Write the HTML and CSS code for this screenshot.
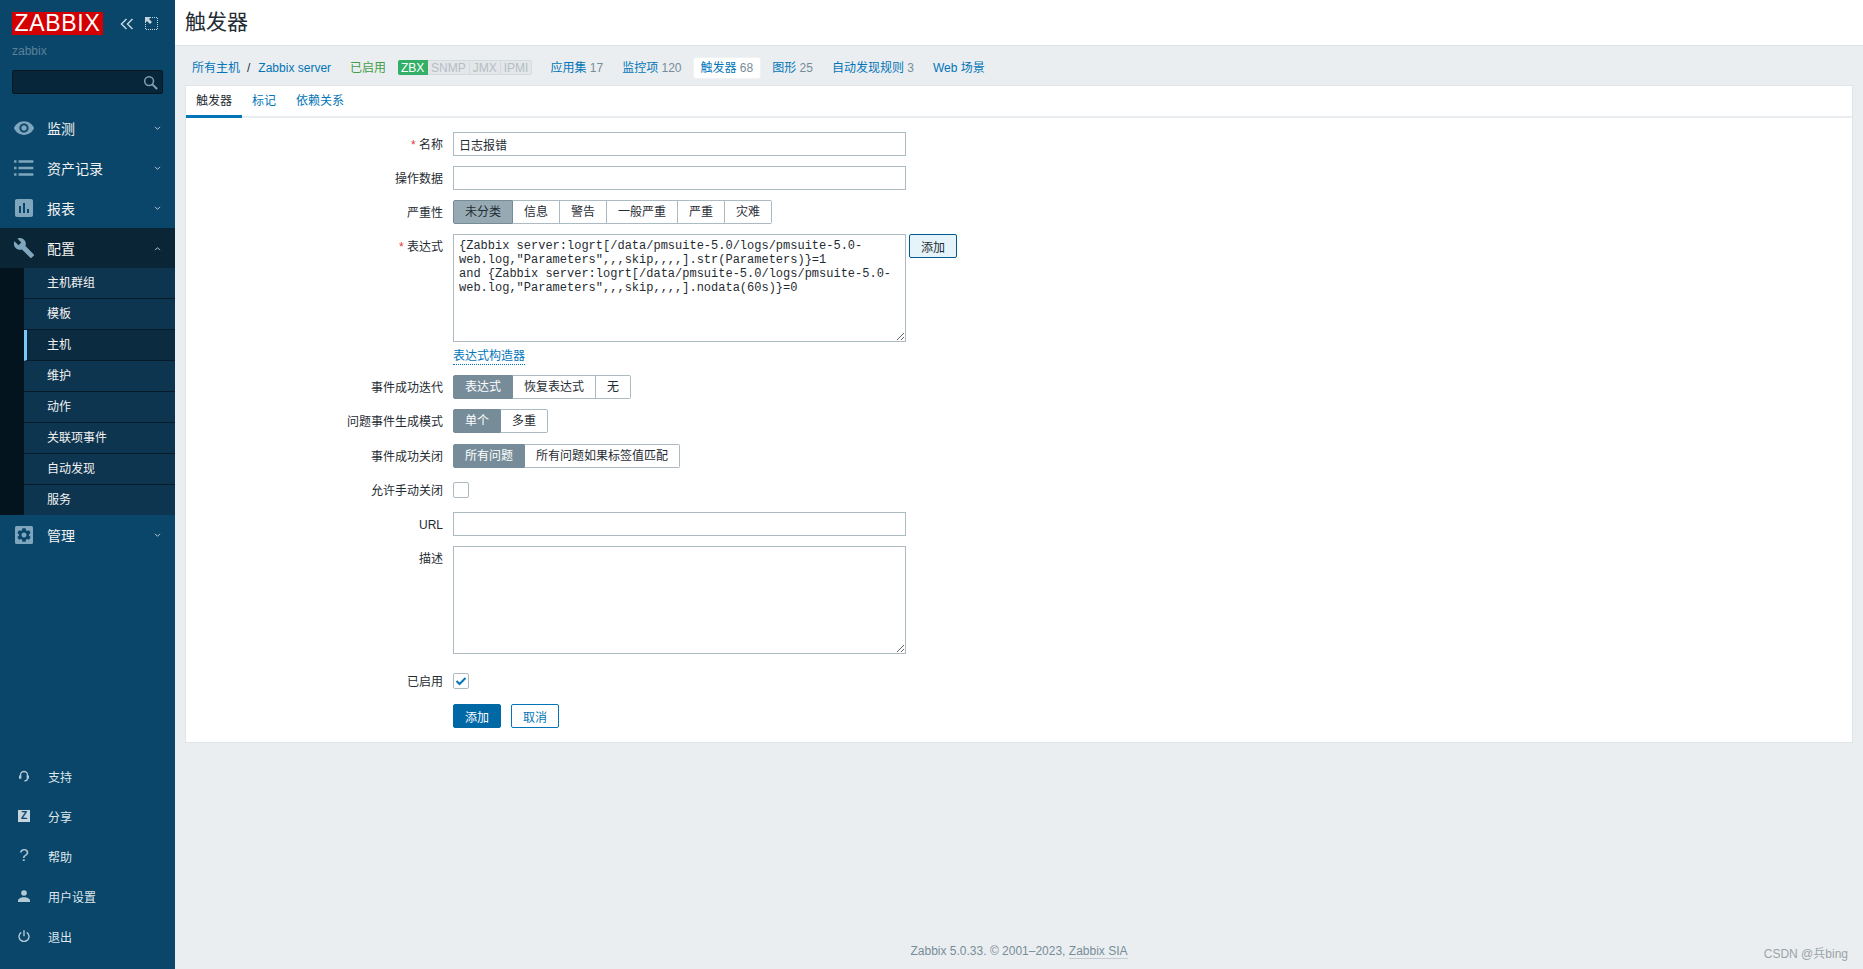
FILE: index.html
```html
<!DOCTYPE html>
<html lang="zh">
<head>
<meta charset="utf-8">
<title>触发器</title>
<link rel="stylesheet" href="styles.css">
</head>
<body>
<div class="app">
  <aside class="sidebar">
    <div class="brand">
      <div class="logo">ZABBIX</div>
      <svg class="collapse" viewBox="0 0 14 14"><path d="M6.500 2 1.500 7l5 5M12.500 2l-5 5 5 5" fill="none" stroke="currentColor" stroke-width="1.500"/></svg>
      <svg class="expand" viewBox="0 0 13 13"><path d="M.5 3v9.500h12V.5H3" fill="none" stroke="currentColor" stroke-dasharray="1 1"/><path d="M0 0h6L4 2l3 3-2 2-3-3-2 2z" fill="currentColor"/></svg>
    </div>
    <div class="host">zabbix</div>
    <div class="search">
      <svg viewBox="0 0 16 16"><circle cx="6.500" cy="6.500" r="4.700" fill="none" stroke="currentColor" stroke-width="1.600"/><path d="m10 10 5 5" stroke="currentColor" stroke-width="2.200"/></svg>
    </div>
    <nav class="menu">
      <div class="item">
        <svg class="ico" viewBox="0 0 24 24"><path d="M12 4.500C7 4.500 2.730 7.610 1 12c1.730 4.390 6 7.500 11 7.500s9.270-3.110 11-7.500c-1.730-4.390-6-7.500-11-7.500zM12 17c-2.760 0-5-2.240-5-5s2.240-5 5-5 5 2.240 5 5-2.240 5-5 5zm0-8c-1.660 0-3 1.340-3 3s1.340 3 3 3 3-1.340 3-3-1.340-3-3-3z"/></svg>
        <span>监测</span>
        <svg class="chev" viewBox="0 0 8 6"><path d="m1 1 3 3 3-3" fill="none" stroke="currentColor" stroke-width="1.200"/></svg>
      </div>
      <div class="item">
        <svg class="ico" viewBox="0 0 20 20"><path d="M1 3h2.200v2.200H1zM5 3h13.500v2.200H5zM1 8.900h2.200v2.200H1zM5 8.900h13.500v2.200H5zM1 14.800h2.200V17H1zM5 14.800h13.500V17H5z"/></svg>
        <span>资产记录</span>
        <svg class="chev" viewBox="0 0 8 6"><path d="m1 1 3 3 3-3" fill="none" stroke="currentColor" stroke-width="1.200"/></svg>
      </div>
      <div class="item">
        <svg class="ico" viewBox="3 3 18 18"><path d="M19 3H5c-1.100 0-2 .9-2 2v14c0 1.100.9 2 2 2h14c1.100 0 2-.9 2-2V5c0-1.100-.9-2-2-2zM9 17H7v-7h2v7zm4 0h-2V7h2v10zm4 0h-2v-4h2v4z"/></svg>
        <span>报表</span>
        <svg class="chev" viewBox="0 0 8 6"><path d="m1 1 3 3 3-3" fill="none" stroke="currentColor" stroke-width="1.200"/></svg>
      </div>
      <div class="item open">
        <svg class="ico" viewBox="0 0 24 24"><path d="M22.700 19l-9.100-9.100c.9-2.300.4-5-1.500-6.900-2-2-5-2.400-7.400-1.300L9 6 6 9 1.600 4.700C.4 7.100.9 10.100 2.900 12.100c1.900 1.900 4.600 2.400 6.900 1.500l9.100 9.100c.4.4 1 .4 1.400 0l2.300-2.300c.5-.4.5-1.100.1-1.400z"/></svg>
        <span>配置</span>
        <svg class="chev" viewBox="0 0 8 6"><path d="m1 5 3-3 3 3" fill="none" stroke="currentColor" stroke-width="1.200"/></svg>
      </div>
      <ul class="sub">
        <li>主机群组</li>
        <li>模板</li>
        <li class="active">主机</li>
        <li>维护</li>
        <li>动作</li>
        <li>关联项事件</li>
        <li>自动发现</li>
        <li>服务</li>
      </ul>
      <div class="item">
        <svg class="ico gear" viewBox="0 0 18 18"><rect width="18" height="18" rx="1.500"/><path class="hole" transform="translate(.6 .6) scale(.7)" d="M19.140 12.940c.04-.3.06-.61.06-.94 0-.32-.02-.64-.07-.94l2.030-1.580c.18-.14.23-.41.12-.61l-1.920-3.320c-.12-.22-.37-.29-.59-.22l-2.390.96c-.5-.38-1.030-.7-1.620-.94l-.36-2.540c-.04-.24-.24-.41-.48-.41h-3.840c-.24 0-.43.17-.47.41l-.36 2.540c-.59.24-1.130.57-1.620.94l-2.390-.96c-.22-.08-.47 0-.59.22L2.740 8.870c-.12.21-.08.47.12.61l2.030 1.580c-.05.3-.09.63-.09.94s.02.64.07.94l-2.030 1.580c-.18.14-.23.41-.12.61l1.920 3.320c.12.22.37.29.59.22l2.390-.96c.5.38 1.030.7 1.620.94l.36 2.540c.05.24.24.41.48.41h3.840c.24 0 .44-.17.47-.41l.36-2.540c.59-.24 1.130-.56 1.620-.94l2.390.96c.22.08.47 0 .59-.22l1.920-3.320c.12-.22.07-.47-.12-.61l-2.010-1.580zM12 15.600c-1.980 0-3.600-1.620-3.600-3.600s1.620-3.600 3.600-3.600 3.600 1.620 3.600 3.600-1.620 3.600-3.600 3.600z"/></svg>
        <span>管理</span>
        <svg class="chev" viewBox="0 0 8 6"><path d="m1 1 3 3 3-3" fill="none" stroke="currentColor" stroke-width="1.200"/></svg>
      </div>
    </nav>
    <div class="user-menu">
      <div class="uitem">
        <span class="uico"><svg viewBox="0 0 12 12"><path d="M2.500 7V5a3.500 3.500 0 0 1 7 0v2M9.500 8.500c0 1.500-1 2.300-3 2.500" fill="none" stroke="currentColor" stroke-width="1.300"/><path d="M1 5.500h2.300v3.200H1zM8.700 5.500H11v3.200H8.700z" fill="currentColor"/></svg></span>
        <span>支持</span>
      </div>
      <div class="uitem"><span class="uico"><b class="zbox">Z</b></span><span>分享</span></div>
      <div class="uitem"><span class="uico qmark">?</span><span>帮助</span></div>
      <div class="uitem">
        <span class="uico"><svg viewBox="0 0 12 12"><circle cx="6" cy="3" r="2.800" fill="currentColor"/><path d="M0 12V10.500C0 8.500 3 7.200 6 7.200s6 1.300 6 3.300V12z" fill="currentColor"/></svg></span>
        <span>用户设置</span>
      </div>
      <div class="uitem">
        <span class="uico"><svg viewBox="0 0 12 12"><path d="M3.300 2.300a5 5 0 1 0 5.400 0M6 .2v6" fill="none" stroke="currentColor" stroke-width="1.400"/></svg></span>
        <span>退出</span>
      </div>
    </div>
  </aside>

  <main class="main">
    <header class="head"><h1>触发器</h1></header>
    <nav class="crumbs">
      <a class="crumb">所有主机</a><span class="sep">/</span><a class="crumb crumb-host">Zabbix server</a>
      <span class="crumb status">已启用</span>
      <span class="tags"><b class="tag on">ZBX</b><b class="tag">SNMP</b><b class="tag">JMX</b><b class="tag">IPMI</b></span>
      <a class="crumb">应用集 <i>17</i></a>
      <a class="crumb">监控项 <i>120</i></a>
      <a class="crumb current">触发器 <i>68</i></a>
      <a class="crumb">图形 <i>25</i></a>
      <a class="crumb">自动发现规则 <i>3</i></a>
      <a class="crumb">Web 场景</a>
    </nav>
    <section class="panel">
      <div class="tabs">
        <a class="tab selected">触发器</a>
        <a class="tab">标记</a>
        <a class="tab">依赖关系</a>
      </div>
      <form class="form">
        <label class="lbl"><em>*</em> 名称</label>
        <div><input class="field" type="text" value="日志报错"></div>

        <label class="lbl">操作数据</label>
        <div><input class="field" type="text"></div>

        <label class="lbl">严重性</label>
        <div class="seg">
          <span class="opt sev">未分类</span><span class="opt">信息</span><span class="opt">警告</span><span class="opt">一般严重</span><span class="opt">严重</span><span class="opt">灾难</span>
        </div>

        <label class="lbl"><em>*</em> 表达式</label>
        <div class="expr">
          <div class="expr-line">
            <textarea class="field area" spellcheck="false">{Zabbix server:logrt[/data/pmsuite-5.0/logs/pmsuite-5.0-web.log,"Parameters",,,skip,,,,].str(Parameters)}=1
and {Zabbix server:logrt[/data/pmsuite-5.0/logs/pmsuite-5.0-web.log,"Parameters",,,skip,,,,].nodata(60s)}=0</textarea>
            <button class="btn-add" type="button">添加</button>
          </div>
          <a class="builder">表达式构造器</a>
        </div>

        <label class="lbl">事件成功迭代</label>
        <div class="seg"><span class="opt on">表达式</span><span class="opt">恢复表达式</span><span class="opt">无</span></div>

        <label class="lbl">问题事件生成模式</label>
        <div class="seg"><span class="opt on">单个</span><span class="opt">多重</span></div>

        <label class="lbl nudge">事件成功关闭</label>
        <div class="seg nudge"><span class="opt on">所有问题</span><span class="opt">所有问题如果标签值匹配</span></div>

        <label class="lbl">允许手动关闭</label>
        <div class="check-cell"><span class="check"></span></div>

        <label class="lbl">URL</label>
        <div><input class="field" type="text"></div>

        <label class="lbl">描述</label>
        <div><textarea class="field area"></textarea></div>

        <label class="lbl lbl-en">已启用</label>
        <div class="check-cell cell-en"><span class="check"><svg viewBox="0 0 14 14"><path d="m2.500 7 3 3 6-6" fill="none" stroke="#0275b8" stroke-width="2"/></svg></span></div>

        <div class="actions">
          <button class="btn primary" type="button">添加</button>
          <button class="btn ghost" type="button">取消</button>
        </div>
      </form>
    </section>
    <footer class="foot">Zabbix 5.0.33. © 2001–2023, <a>Zabbix SIA</a></footer>
    <div class="mark">CSDN @兵bing</div>
  </main>
</div>
</body>
</html>
```

FILE: styles.css
```css
* { box-sizing: border-box; }
html, body { margin: 0; height: 100%; }
body {
  font-family: "Liberation Sans", "Noto Sans CJK SC", sans-serif;
  font-size: 12px;
  color: #1f2c33;
  background: #ebeef0;
  overflow: hidden;
}
.app { display: flex; height: 969px; }

/* sidebar */
.sidebar {
  width: 175px;
  flex: none;
  background: #0a466a;
  color: #f2f2f2;
  display: flex;
  flex-direction: column;
}
.brand { display: flex; align-items: center; padding: 12px 0 0 12px; height: 35px; }
.logo {
  width: 91px;
  height: 23px;
  background: #d40000;
  color: #fff;
  font-size: 23px;
  line-height: 23px;
  letter-spacing: .7px;
  text-align: center;
}
.collapse { width: 14px; height: 14px; margin-left: 17px; color: #c5d4dd; }
.expand { width: 13px; height: 13px; margin-left: 11px; color: #c5d4dd; }
.host { margin: 9px 0 0 12px; height: 14px; line-height: 14px; color: #5c8199; }
.search {
  margin: 12px 12px 0;
  height: 24px;
  background: #08263a;
  border: 1px solid #04161f;
  border-radius: 2px;
  display: flex;
  align-items: center;
  justify-content: flex-end;
  padding-right: 4px;
  color: #7fa0b3;
}
.search svg { width: 15px; height: 15px; }
.menu { margin-top: 14px; }
.item {
  height: 40px;
  display: flex;
  align-items: center;
  padding-left: 13px;
  font-size: 14px;
  color: #f2f2f2;
}
.item.open { background: #0a2536; }
.ico { width: 22px; height: 22px; fill: #7fa6bd; flex: none; }
.item:nth-child(3) .ico, .gear { width: 18px; height: 18px; margin: 0 2px 0 2px; }
.hole { fill: #0a466a; }
.item span { margin-left: 12px; flex: 1; }
.chev { width: 7px; height: 5px; margin-right: 14px; color: #b5c7d2; }
.sub {
  list-style: none;
  margin: 0;
  padding: 0 0 0 24px;
  background: #04141f;
}
.sub li {
  height: 31px;
  line-height: 29px;
  padding: 1px 0 0 23px;
  background: #0e3550;
  border-bottom: 1px solid #061c2b;
  color: #f2f2f2;
}
.sub li:last-child { height: 30px; border-bottom: 0; }
.sub li.active {
  background: #0a2b40;
  border-left: 3px solid #7ac8f5;
  padding-left: 20px;
}
.user-menu { margin-top: auto; padding-bottom: 13px; }
.uitem { height: 40px; display: flex; align-items: center; padding-left: 18px; color: #dfe7ec; }
.uico {
  width: 12px;
  height: 12px;
  margin-right: 18px;
  color: #b3c9d6;
  display: flex;
  align-items: center;
  justify-content: center;
}
.uico svg { width: 12px; height: 12px; }
.zbox {
  width: 12px;
  height: 12px;
  flex: none;
  background: #c4d5df;
  color: #0a466a;
  font-size: 10px;
  line-height: 12px;
  text-align: center;
}
.qmark { font-size: 17px; font-weight: 400; }

/* main */
.main { flex: 1; min-width: 0; display: flex; flex-direction: column; position: relative; }
.head { height: 46px; background: #fff; border-bottom: 1px solid #dfe4e7; padding-left: 10px; }
.head h1 { margin: 0; font-size: 21px; font-weight: 400; line-height: 44px; color: #1f2c33; }
.crumbs { height: 39px; display: flex; align-items: center; padding-left: 10px; padding-top: 4px; color: #0275b8; }
.crumb { padding: 0 7px; height: 20px; line-height: 20px; margin-right: 5px; color: #0275b8; white-space: nowrap; }
.crumb i { font-style: normal; color: #768d99; }
.crumb.current { background: #fff; border-radius: 2px; box-shadow: 0 0 0 1px #f0f2f3; }
.crumb.status { color: #429e47; }
.crumbs .crumb:first-child { margin-right: 0; }
.sep { color: #1f2c33; margin-right: 1px; }
.tags { display: flex; height: 15px; margin: 0 11px 0 0; font-size: 12px; }
.tag {
  font-weight: 400;
  padding: 0 3px;
  color: #b5bec3;
  background: #e3e7ea;
  border: 1px solid #d5dadd;
  border-left: 0;
  line-height: 14px;
}
.tag:last-child { border-radius: 0 2px 2px 0; }
.tag.on { background: #34af67; border-color: #34af67; color: #fff; padding: 0; border-radius: 2px 0 0 2px; width: 30px; text-align: center; }

.panel {
  margin: 0 10px;
  height: 658px;
  background: #fff;
  border: 1px solid #dfe4e7;
}
.tabs { display: flex; height: 32px; border-bottom: 2px solid #ebeef0; }
.tab { padding: 0 10px; line-height: 30px; height: 32px; color: #0275b8; }
.tab.selected { color: #1f2c33; border-bottom: 3px solid #0275b8; }

.form {
  display: grid;
  grid-template-columns: 257px 1fr;
  column-gap: 10px;
  row-gap: 10px;
  padding-top: 14px;
}
.lbl { height: 24px; padding-top: 1px; text-align: right; line-height: 24px; color: #1f2c33; white-space: nowrap; }
.lbl em { color: #e33734; font-style: normal; }
.nudge { margin-top: 1px; }
.field {
  display: block;
  width: 453px;
  height: 24px;
  border: 1px solid #acbbc2;
  background: #fff;
  padding: 0 5px;
  font: 12px "Liberation Sans", "Noto Sans CJK SC", sans-serif;
  color: #1f2c33;
  outline: 0;
  border-radius: 0;
}
.area {
  height: 108px;
  padding: 4px 5px;
  font-family: "Liberation Mono", "Noto Sans CJK SC", monospace;
  line-height: 14px;
  resize: both;
  overflow: hidden;
}
.expr { height: 131px; }
.expr-line { display: flex; align-items: flex-start; }
.btn-add {
  width: 48px;
  height: 24px;
  margin-left: 3px;
  background: #e5f3fb;
  border: 1px solid #005c8f;
  border-radius: 2px;
  color: #1f2c33;
  font: inherit;
  padding: 0;
}
.builder {
  display: inline-block;
  margin-top: 7px;
  line-height: 15px;
  color: #0275b8;
  border-bottom: 1px dotted #0275b8;
}
.seg { display: flex; height: 24px; width: max-content; }
.opt {
  height: 24px;
  line-height: 23px;
  padding: 0 11px;
  border: 1px solid #acbbc2;
  border-left: 0;
  background: #fff;
  color: #1f2c33;
  white-space: nowrap;
}
.opt:first-child { border-left: 1px solid #acbbc2; border-radius: 2px 0 0 2px; }
.opt:last-child { border-radius: 0 2px 2px 0; }
.opt.sev { background: #97aab3; border-color: #768d99; color: #1f2c33; }
.opt.on { background: #768d99; border-color: #768d99; color: #fff; }
.check-cell { height: 24px; display: flex; align-items: center; }
.check {
  width: 16px;
  height: 16px;
  border: 1px solid #acbbc2;
  border-radius: 2px;
  background: #fff;
  display: block;
}
.check svg { display: block; width: 14px; height: 14px; }
.lbl-en, .cell-en { margin-top: 5px; }
.actions {
  grid-column: 2;
  display: flex;
  gap: 10px;
  margin-top: 1px;
}
.btn {
  height: 24px;
  border-radius: 2px;
  font: inherit;
  padding: 0;
}
.primary { width: 48px; background: #0068a5; border: 1px solid #0068a5; color: #fff; }
.ghost { width: 48px; background: #fff; border: 1px solid #0275b8; color: #0275b8; }

.foot { margin-top: auto; height: 25px; text-align: center; line-height: 14px; color: #768d99; }
.foot a { color: #768d99; border-bottom: 1px solid #c3ccd1; }
.mark { position: absolute; right: 15px; bottom: 8px; color: #9aa3a8; font-size: 12px; line-height: 14px; }
```
